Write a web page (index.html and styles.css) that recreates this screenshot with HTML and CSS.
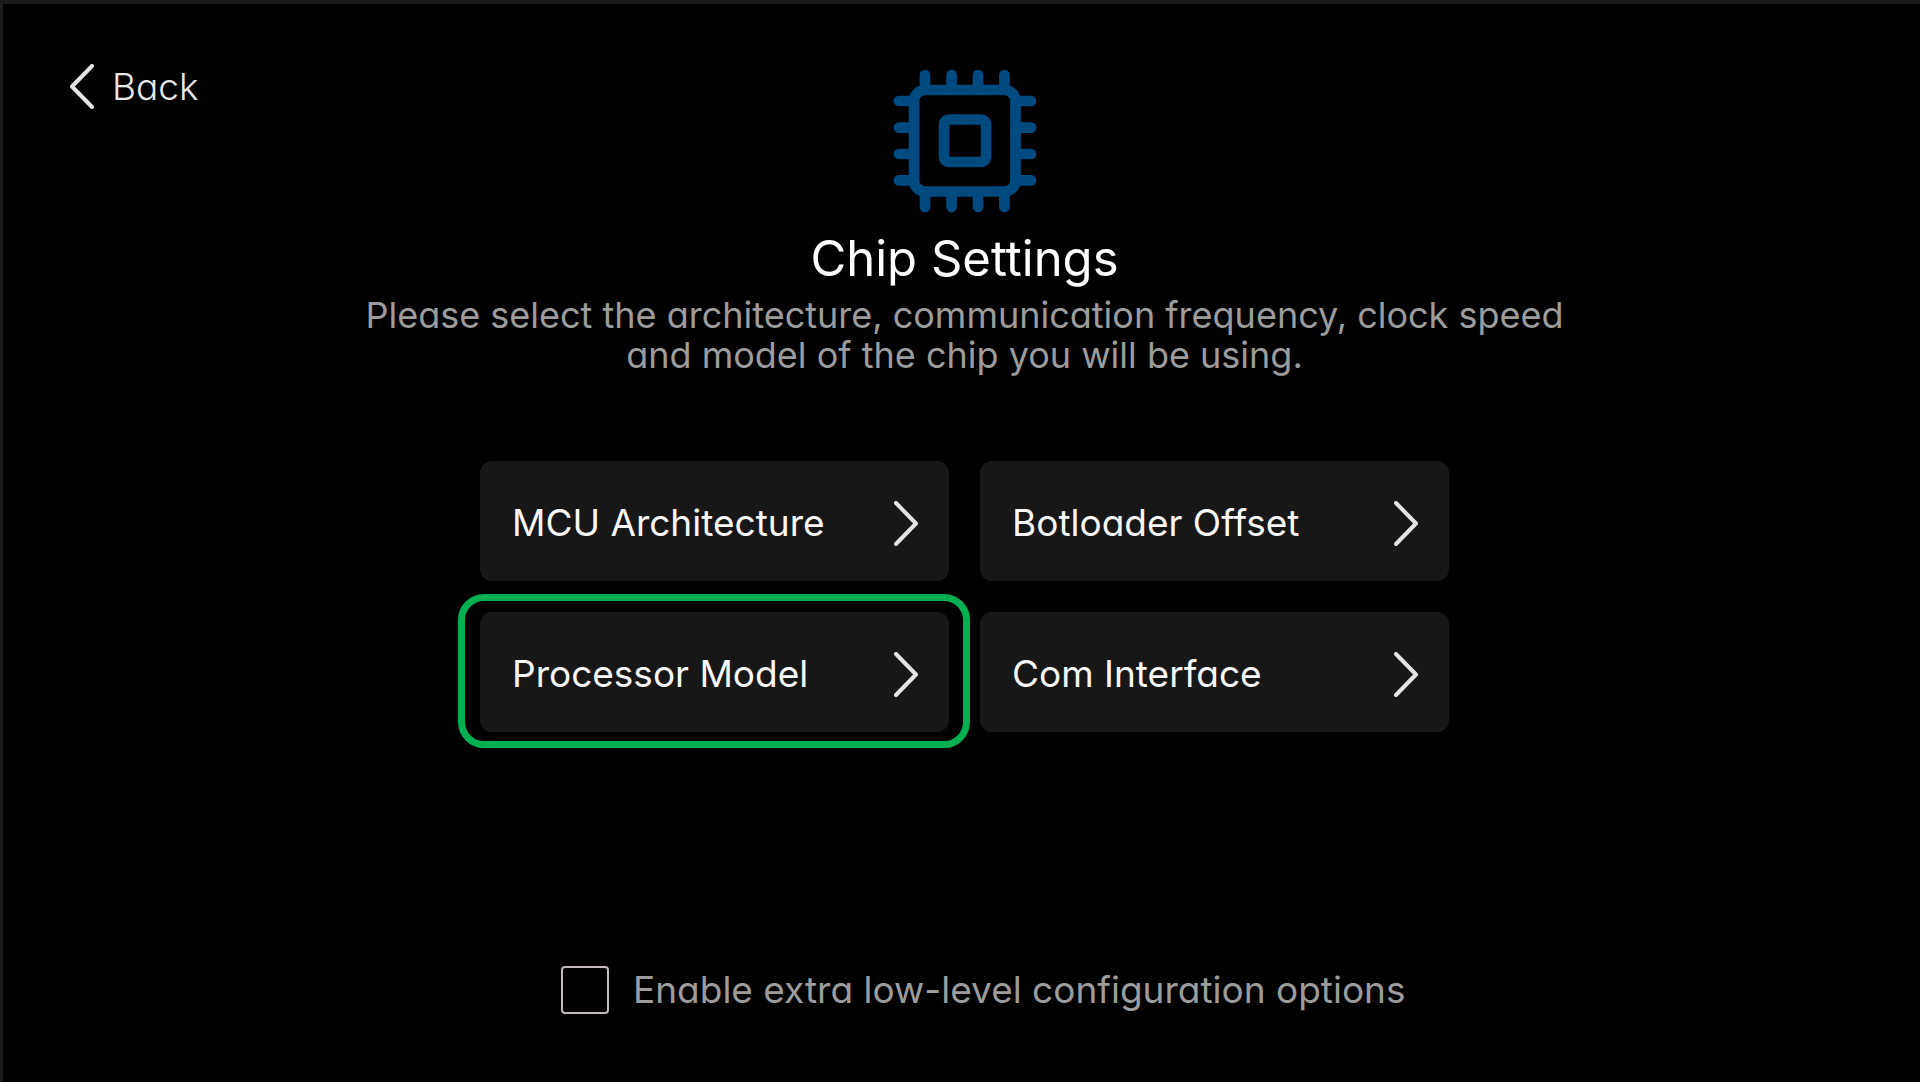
FILE: index.html
```html
<!DOCTYPE html>
<html lang="en">
<head>
  <meta charset="utf-8">
  <meta name="viewport" content="width=device-width, initial-scale=1">
  <title>Chip Settings</title>
  <link rel="stylesheet" href="styles.css">
</head>
<body>
  <svg class="symbols" aria-hidden="true">
    <symbol id="chevron-right" viewBox="0 0 25 45">
      <path d="M2 2 L22 22.500 L2 43" fill="none" stroke="currentColor" stroke-width="4" stroke-linecap="round" stroke-linejoin="round"/>
    </symbol>
    <symbol id="chevron-left" viewBox="0 0 25 45">
      <path d="M23 2 L3 22.500 L23 43" fill="none" stroke="currentColor" stroke-width="4" stroke-linecap="round" stroke-linejoin="round"/>
    </symbol>
  </svg>

  <main class="screen">
    <header class="header">
      <button class="back" type="button">
        <svg class="chevron" aria-hidden="true"><use href="#chevron-left"/></svg>
        <span>Back</span>
      </button>

      <div class="intro">
        <svg class="chip" viewBox="0 0 144 144" aria-hidden="true">
          <g fill="none" stroke="currentColor" stroke-width="10.7" stroke-linecap="round">
            <rect x="21" y="21" width="101.500" height="101.500" rx="11"/>
            <rect x="51" y="50.500" width="42" height="42.500" rx="5"/>
            <path d="M32 6V20M58.600 6V20M85 6V20M111.400 6V20"/>
            <path d="M32 124V138M58.600 124V138M85 124V138M111.400 124V138"/>
            <path d="M6 32H20M6 58.600H20M6 85H20M6 111.400H20"/>
            <path d="M124 32H138M124 58.600H138M124 85H138M124 111.400H138"/>
          </g>
        </svg>
        <h1 class="title">Chip Settings</h1>
        <p class="lead">Please select the architecture, communication frequency, clock speed and model of the chip you will be using.</p>
      </div>
    </header>

    <section class="settings">
      <div class="cards">
        <button class="card" type="button">
          <span>MCU Architecture</span>
          <svg class="chevron" aria-hidden="true"><use href="#chevron-right"/></svg>
        </button>
        <button class="card" type="button">
          <span>Botloader Offset</span>
          <svg class="chevron" aria-hidden="true"><use href="#chevron-right"/></svg>
        </button>
        <button class="card card-selected" type="button">
          <span>Processor Model</span>
          <svg class="chevron" aria-hidden="true"><use href="#chevron-right"/></svg>
        </button>
        <button class="card" type="button">
          <span>Com Interface</span>
          <svg class="chevron" aria-hidden="true"><use href="#chevron-right"/></svg>
        </button>
      </div>

      <label class="option" for="low-level">
        <input class="checkbox" id="low-level" type="checkbox">
        <span>Enable extra low-level configuration options</span>
      </label>
    </section>
  </main>
</body>
</html>
```
FILE: styles.css
```css
*,
*::before {
  box-sizing: border-box;
}

body {
  margin: 0;
  background: #000;
  color: #f7f7f7;
  font-family: Inter, "Open Sans", sans-serif;
  font-size: 37px;
  font-weight: 400;
  line-height: 40px;
  /* single-storey "a" */
  font-feature-settings: "cv11";
}

button {
  margin: 0;
  border: 0;
  color: inherit;
  font: inherit;
  font-feature-settings: inherit;
  cursor: pointer;
}

.symbols {
  position: absolute;
  width: 0;
  height: 0;
}

.screen {
  min-height: 100vh;
  padding: 60px 60px 60px 66px;
  border-top: 4px solid #1c1c1c;
  border-left: 3px solid #1c1c1c;
}

.header {
  display: grid;
  grid-template-columns: 1fr auto 1fr;
  align-items: start;
}

.back {
  display: flex;
  align-items: center;
  justify-self: start;
  gap: 18px;
  padding: 0;
  background: none;
  color: #e8e8e8;
  font-weight: 300;
}

.chevron {
  flex: none;
  width: 25px;
  height: 45px;
  color: #e4e4e4;
}

.intro {
  display: flex;
  flex-direction: column;
  align-items: center;
  padding-top: 5px;
  text-align: center;
}

.chip {
  width: 144px;
  height: 144px;
  color: #004a80;
}

.title {
  margin: 16px 0 6px;
  color: #fff;
  font-size: 49px;
  font-weight: 400;
  line-height: 60px;
}

.lead {
  max-width: 1220px;
  margin: 0;
  color: #9c9c9c;
  font-size: 36px;
}

.settings {
  max-width: 969px;
  margin: 86px auto 0;
}

.cards {
  display: grid;
  grid-template-columns: 1fr 1fr;
  gap: 31px;
}

.card {
  position: relative;
  display: flex;
  align-items: center;
  justify-content: space-between;
  min-height: 120px;
  padding: 4px 30px 0 32px;
  border-radius: 12px;
  background: #171717;
  text-align: left;
}

/* ring drawn around the chosen card */
.card-selected::before {
  content: "";
  position: absolute;
  inset: -18px -21px -16px -22px;
  border: 7px solid #02b052;
  border-radius: 26px;
}

.option {
  display: flex;
  align-items: center;
  gap: 24px;
  margin-top: 234px;
  padding-left: 81px;
  color: #9c9c9c;
}

.checkbox {
  flex: none;
  appearance: none;
  width: 48px;
  height: 48px;
  margin: 0;
  border: 2px solid #c4b8b8;
  border-radius: 4px;
}

.checkbox:checked {
  background: #02b052;
}
```
